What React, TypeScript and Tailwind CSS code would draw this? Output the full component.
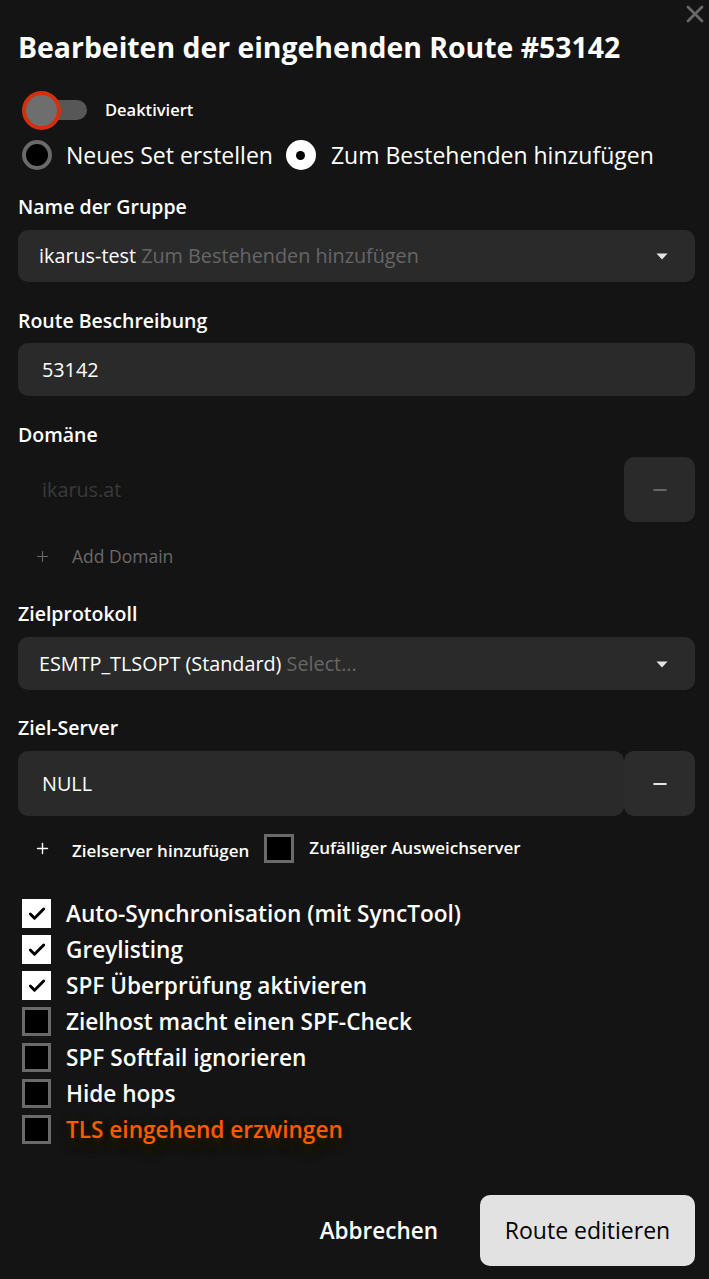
import { X, Check, Plus, Minus } from 'lucide-react'

const options = [
  { label: 'Auto-Synchronisation (mit SyncTool)', checked: true },
  { label: 'Greylisting', checked: true },
  { label: 'SPF Überprüfung aktivieren', checked: true },
  { label: 'Zielhost macht einen SPF-Check', checked: false },
  { label: 'SPF Softfail ignorieren', checked: false },
  { label: 'Hide hops', checked: false },
]

function Caret() {
  return (
    <svg width="12" height="8" viewBox="0 0 12 8" className="shrink-0">
      <path d="M0.5 1.5h11L6 7.5z" fill="#e5e5e5" />
    </svg>
  )
}

function Box({ checked }: { checked: boolean }) {
  if (checked) {
    return (
      <span className="flex h-[29px] w-[29px] shrink-0 items-center justify-center bg-white">
        <Check className="h-[20px] w-[20px] text-black" strokeWidth={3.5} />
      </span>
    )
  }
  return <span className="h-[29px] w-[29px] shrink-0 border-[3px] border-[#6a6a6a] bg-black" />
}

function Label({ children, className }: { children: React.ReactNode; className: string }) {
  return <label className={`block text-[19.5px] font-semibold leading-[28px] ${className}`}>{children}</label>
}

export default function App() {
  return (
    <div
      className="relative min-h-[1279px] bg-[#141414] pl-[18px] pr-[14px] text-white"
      style={{ fontFamily: '"Open Sans", "Noto Sans", sans-serif' }}
    >
      <button className="absolute right-0 top-0 text-[#686868]">
        <X className="h-[28px] w-[28px]" strokeWidth={2.4} />
      </button>

      <h1 className="pt-[29px] text-[28.4px] font-bold leading-[36px]">
        Bearbeiten der eingehenden Route #53142
      </h1>

      <div className="mt-[26px] flex items-center gap-[14px] pl-[4px]">
        <div className="relative h-[38px] w-[69px]">
          <span className="absolute left-[8px] top-[9px] h-[20px] w-[57px] rounded-full bg-[#575757]" />
          <span className="absolute left-0 top-0 h-[39px] w-[39px] rounded-full border-[4px] border-[#d2300f] bg-[#6e6e6e]" />
        </div>
        <span className="text-[16.5px] font-semibold">Deaktiviert</span>
      </div>

      <div className="mt-[11px] flex h-[30px] items-center pl-[4px] text-[23px] font-medium">
        <span className="h-[30px] w-[30px] shrink-0 rounded-full border-[4px] border-[#6a6a6a] bg-black" />
        <span className="ml-[14px]">Neues Set erstellen</span>
        <span className="ml-[13px] flex h-[30px] w-[30px] shrink-0 items-center justify-center rounded-full bg-white">
          <span className="h-[9px] w-[9px] rounded-full bg-black" />
        </span>
        <span className="ml-[15px]">Zum Bestehenden hinzufügen</span>
      </div>

      <Label className="mt-[23px]">Name der Gruppe</Label>
      <div className="mt-[9px] flex h-[52px] items-center justify-between rounded-[10px] bg-[#2a2a2a] pl-[21px] pr-[27px] text-[19.8px]">
        <span>
          ikarus-test <span className="text-[#666]">Zum Bestehenden hinzufügen</span>
        </span>
        <Caret />
      </div>

      <Label className="mt-[25px]">Route Beschreibung</Label>
      <div className="mt-[8px] flex h-[53px] items-center rounded-[10px] bg-[#2a2a2a] pl-[24px] text-[19.8px]">
        53142
      </div>

      <Label className="mt-[25px]">Domäne</Label>
      <div className="mt-[8px] flex h-[65px] items-stretch">
        <div className="flex flex-1 items-center pl-[24px] text-[19.8px] text-[#3a3a3a]">ikarus.at</div>
        <div className="flex w-[71px] items-center justify-center rounded-[10px] bg-[#2a2a2a] text-[#666]">
          <Minus className="h-[20px] w-[20px]" strokeWidth={2.2} />
        </div>
      </div>
      <div className="mt-[20px] flex h-[28px] items-center pl-[16px] text-[17.5px] font-medium text-[#6a6a6a]">
        <Plus className="h-[17px] w-[17px]" strokeWidth={1.5} />
        <span className="ml-[21px]">Add Domain</span>
      </div>

      <Label className="mt-[30px]">Zielprotokoll</Label>
      <div className="mt-[9px] flex h-[53px] items-center justify-between rounded-[10px] bg-[#2a2a2a] pl-[21px] pr-[27px] text-[19.8px]">
        <span>
          ESMTP_TLSOPT (Standard) <span className="text-[#666]">Select...</span>
        </span>
        <Caret />
      </div>

      <Label className="mt-[24px]">Ziel-Server</Label>
      <div className="mt-[9px] flex h-[65px] items-stretch">
        <div className="flex flex-1 items-center rounded-[10px] bg-[#2a2a2a] pl-[24px] text-[19.8px]">
          NULL
        </div>
        <div className="flex w-[71px] items-center justify-center rounded-[10px] bg-[#2c2c2c] text-[#e5e5e5]">
          <Minus className="h-[20px] w-[20px]" strokeWidth={2.4} />
        </div>
      </div>
      <div className="mt-[17px] flex h-[30px] items-center text-[17px] font-semibold">
        <Plus className="ml-[16px] h-[17px] w-[17px]" strokeWidth={2} />
        <span className="ml-[21px] mt-[6px]">Zielserver hinzufügen</span>
        <span className="ml-[15px] h-[29px] w-[30px] shrink-0 border-[3px] border-[#6a6a6a] bg-black" />
        <span className="ml-[15px]">Zufälliger Ausweichserver</span>
      </div>

      <div className="mt-[36px] flex flex-col gap-[7px] pl-[4px]">
        {options.map((o) => (
          <div key={o.label} className="flex h-[29px] items-center gap-[15px] text-[22.6px] font-semibold">
            <Box checked={o.checked} />
            <span>{o.label}</span>
          </div>
        ))}
        <div className="flex h-[29px] items-center gap-[15px] text-[22.6px] font-semibold">
          <Box checked={false} />
          <span className="text-[#ff5a00] [text-shadow:0_2px_4px_#1f1a00,0_7px_7px_#1f1a00,0_-2px_6px_#1f1a00,0_10px_10px_#1a1600]">
            TLS eingehend erzwingen
          </span>
        </div>
      </div>

      <div className="mt-[51px] flex items-center justify-end">
        <button className="mr-[42px] text-[22.5px] font-semibold text-white">Abbrechen</button>
        <button className="h-[71px] w-[215px] rounded-[10px] bg-[#e2e2e2] text-[23px] font-medium text-black">
          Route editieren
        </button>
      </div>
    </div>
  )
}
